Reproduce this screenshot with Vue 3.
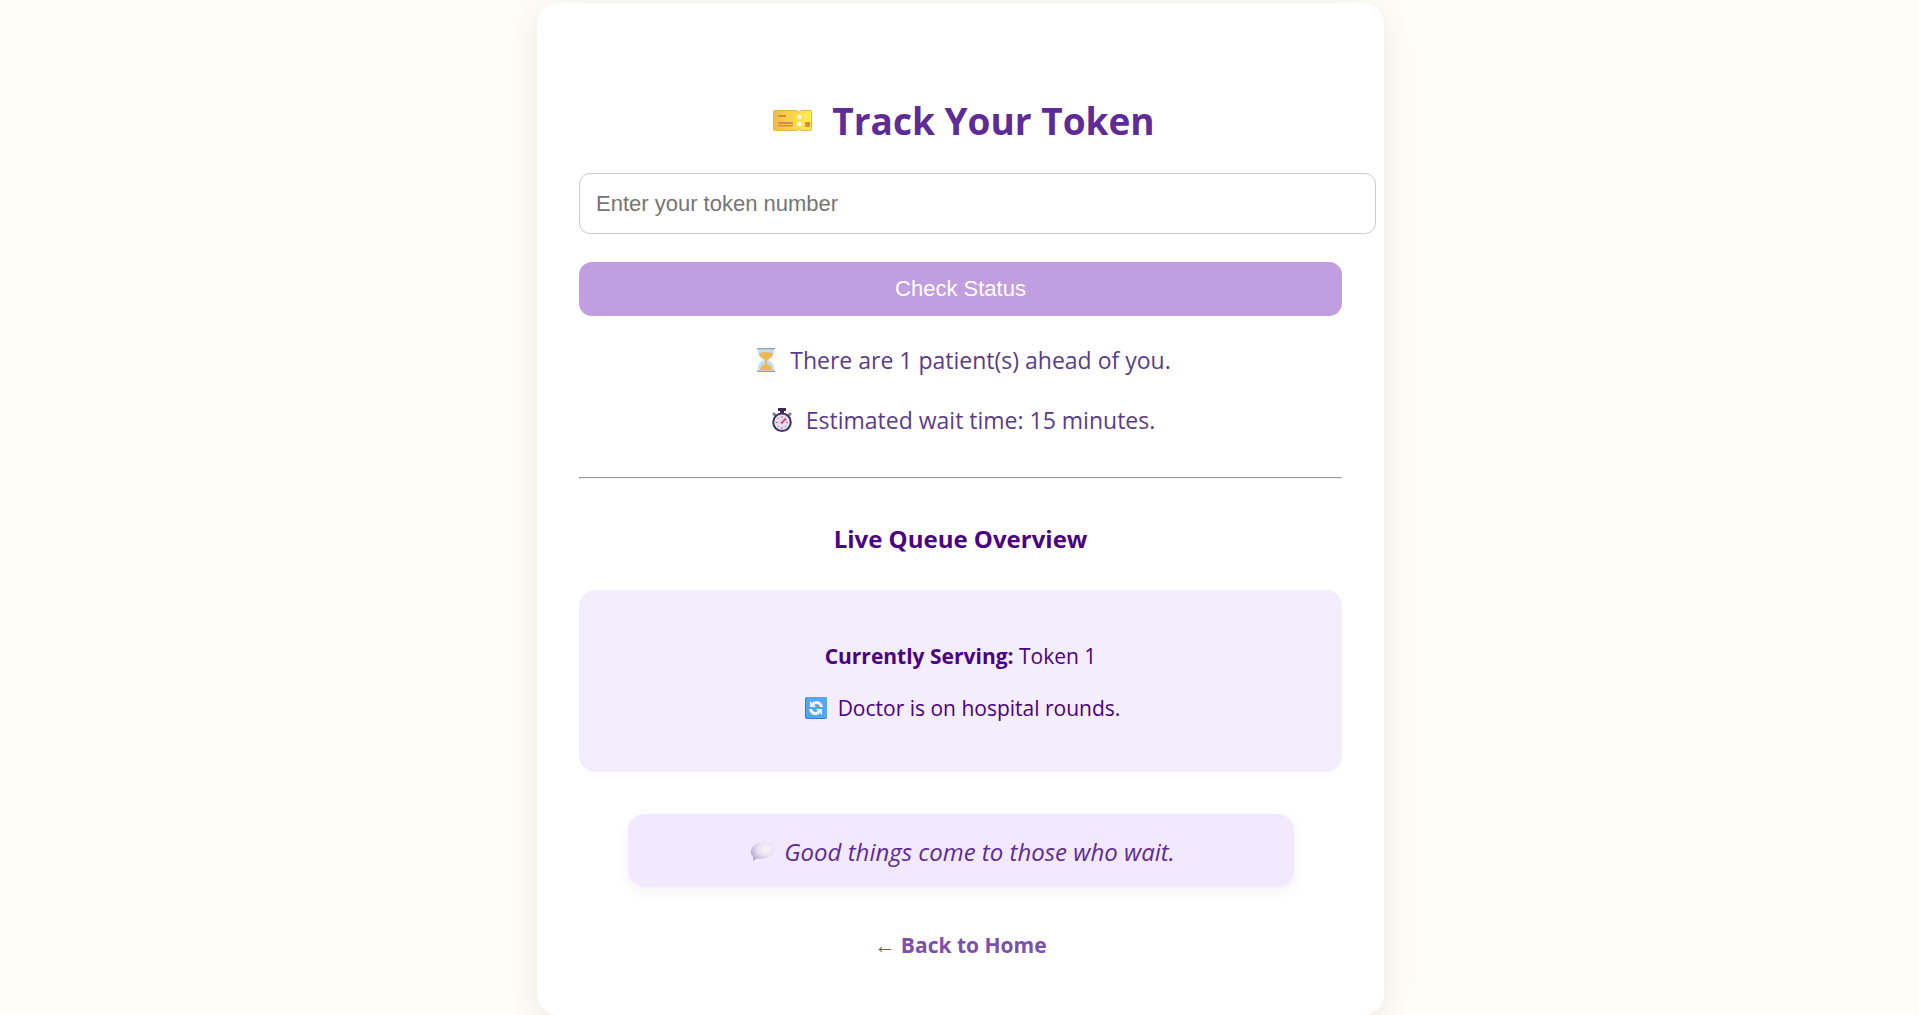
<script setup>
import { ref } from 'vue'

const token = ref('')
</script>

<template>
  <main class="page">
    <section class="card">
      <h1 class="title">
        <svg class="ticket" viewBox="-7 0 46 24" aria-hidden="true">
          <defs>
            <linearGradient id="gold" x1="0" x2="1">
              <stop offset="0" stop-color="#f3bd41" />
              <stop offset="1" stop-color="#ffef4b" />
            </linearGradient>
          </defs>
          <path d="M2 1H24q2.500 3 4 0H37q2 0 2 2V20q0 2-2 2H28q-1.500-3-4 0H2q-2 0-2-2V3q0-2 2-2z" fill="#e5b443" />
          <path d="M2 2H24q2.500 3 4 0H37q1 0 1 1V19q0 2-1 2H28q-1.500-3-4 0H2q-1 0-1-2V3q0-1 1-1z" fill="url(#gold)" />
          <circle cx="26.500" cy="8" r="2.200" fill="#fff" />
          <circle cx="26.500" cy="15" r="2.200" fill="#fff" />
          <path d="M5 6h8v2H5zM5 13h15v2H5zM5 16h15v1.500H5zM32 13h5v5h-5z" fill="#d98c49" />
        </svg>
        <span>Track Your Token</span>
      </h1>

      <form @submit.prevent>
        <input v-model="token" class="field" type="text" aria-label="Token number" placeholder="Enter your token number" />
        <button class="check" type="submit">Check Status</button>
      </form>

      <p class="status">
        <svg class="glyph" viewBox="-4 0 28 24" aria-hidden="true">
          <path d="M4 2h16c0 6-2 8-6 10 4 2 6 4 6 10H4c0-6 2-8 6-10C6 10 4 8 4 2z" fill="#b9e0fb" />
          <path d="M5 5c4-1 10-1 14 0-1 4-3 5-6 7v4c3 1 5 3 5 6H6c0-3 2-5 5-6v-4C8 10 6 9 5 5z" fill="#f5b553" />
          <path d="M3 0h18v1.500H3zM3 22.500h18V24H3z" fill="#9b9a9c" />
        </svg>
        <span>There are 1 patient(s) ahead of you.</span>
      </p>
      <p class="status">
        <svg class="glyph" viewBox="-4 0 28 24" aria-hidden="true">
          <path d="M8 0h8v3h-2v3h-4V3H8z" fill="#3c2758" />
          <path d="M3 5l3 3M21 5l-3 3" stroke="#8b849b" stroke-width="3" />
          <circle cx="12" cy="14.200" r="8.800" fill="#e5dcef" stroke="#43345f" stroke-width="2" />
          <path d="M12 8v2M12 19v2M6 14.500h2M16 14.500h2M8 10l1 1M8 19l1-1M16 19l-1-1" stroke="#857799" />
          <path d="M11 15.500l5-5" stroke="#ee3f70" stroke-width="2" />
        </svg>
        <span>Estimated wait time: 15 minutes.</span>
      </p>

      <hr class="rule" />

      <h2 class="subtitle">Live Queue Overview</h2>
      <div class="queue">
        <p><strong>Currently Serving:</strong> Token 1</p>
        <p class="rounds">
          <svg class="refresh" viewBox="-4 0 26 22" aria-hidden="true">
            <rect width="22" height="22" rx="2" fill="#397ad4" />
            <rect x="1" width="21" height="21" rx="2" fill="#52a7f7" />
            <path d="M5 4v6h6L9 8c3-2 5-1 6 2h3c-1-6-7-8-11-4zM17 18v-6h-6l2 2c-3 2-5 1-6-2H4c1 6 7 8 11 4z" fill="#f1f1ff" />
          </svg>
          <span>Doctor is on hospital rounds.</span>
        </p>
      </div>

      <p class="quote">
        <svg class="glyph" viewBox="-4 0 28 24" aria-hidden="true">
          <defs>
            <radialGradient id="bubble" cx="0.65" cy="0.35" r="0.7">
              <stop offset="0" stop-color="#f8f5fb" />
              <stop offset="0.5" stop-color="#ebe4f2" />
              <stop offset="1" stop-color="#b9a8d4" />
            </radialGradient>
          </defs>
          <path d="M3 21v-4.500C-2 12 2 5 9 3c8-2 15 0 15 6 0 7-8 11-17 9.500z" fill="url(#bubble)" />
        </svg>
        <em>Good things come to those who wait.</em>
      </p>

      <a class="home" href="#"><span class="arrow">←</span> Back to Home</a>
    </section>
  </main>
</template>

<style>
body {
  margin: 0;
  background: #fffbf6;
}
</style>

<style scoped>
.page {
  padding: 3px 20px 0 22px;
  font-family: "Segoe UI", "Open Sans", "Noto Sans", sans-serif;
  color: #4b0082;
}
.card {
  box-sizing: border-box;
  max-width: 847px;
  margin: 0 auto;
  padding: 86px 42px 54px;
  border-radius: 21px;
  background: #fff;
  box-shadow: 0 8px 32px rgba(0, 0, 0, 0.08);
  text-align: center;
}
.title,
.status,
.rounds,
.quote {
  display: flex;
  align-items: center;
  justify-content: center;
}
.title {
  gap: 20px;
  margin: 0 0 20px;
  font-size: 37px;
  line-height: 64px;
  font-weight: 700;
  color: #5e2b97;
}
.ticket {
  width: 46px;
  height: 24px;
}
.field {
  display: block;
  width: 100%;
  height: 59px;
  padding: 0 16px;
  border: 1px solid #ccc;
  border-radius: 11px;
  background: #fff;
  box-sizing: content-box;
  font: 22px "Liberation Sans", Arial, sans-serif;
}
.field::placeholder {
  color: #757575;
}
.check {
  display: block;
  width: 100%;
  height: 54px;
  margin-top: 28px;
  border: 0;
  border-radius: 13px;
  background: #c19ee0;
  color: #fff;
  font: 22px "Liberation Sans", Arial, sans-serif;
}
.status {
  gap: 12px;
  margin: 24px 0 0;
  font-size: 23px;
  line-height: 40px;
  color: #5a3d8a;
}
.status + .status {
  margin-top: 20px;
}
.glyph {
  width: 28px;
  height: 24px;
}
.rule {
  margin: 37px 0 0;
}
.subtitle {
  margin: 43px 0 34px;
  font-size: 24px;
  line-height: 34px;
}
.queue {
  padding: 51px 20px 49px;
  border-radius: 16px;
  background: #f4edfc;
  font-size: 21px;
  line-height: 30px;
}
.queue p {
  margin: 0;
}
.queue .rounds {
  gap: 11px;
  margin-top: 22px;
}
.refresh {
  width: 26px;
  height: 22px;
}
.quote {
  gap: 10px;
  box-sizing: border-box;
  max-width: 666px;
  margin: 42px auto 0;
  padding: 21px 20px 19px;
  border-radius: 16px;
  background: #f3e9ff;
  box-shadow: 0 5px 16px rgba(0, 0, 0, 0.05);
  font-size: 24px;
  line-height: 33px;
  color: #5e2b97;
}
.home {
  display: inline-block;
  margin-top: 42px;
  font-size: 21px;
  line-height: 32px;
  font-weight: 700;
  color: #7b4fab;
  text-decoration: none;
}
.arrow {
  font-weight: 400;
}
</style>
